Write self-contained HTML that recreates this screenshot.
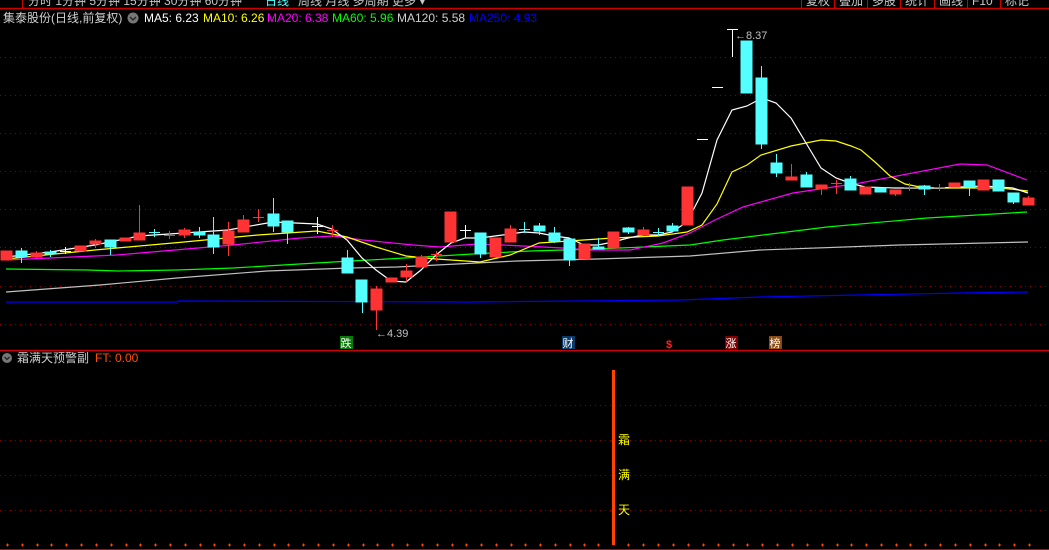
<!DOCTYPE html>
<html><head><meta charset="utf-8"><style>
html,body{margin:0;padding:0;background:#000;width:1049px;height:550px;overflow:hidden}
svg{display:block}
text{font-family:"Liberation Sans","Noto Sans CJK SC",sans-serif}
</style></head><body>
<svg width="1049" height="550" viewBox="0 0 1049 550" xmlns="http://www.w3.org/2000/svg">
<rect width="1049" height="550" fill="#000"/>
<!-- top menu -->
<g font-size="12" fill="#c8c8c8">
<text x="28" y="5">分时  1分钟  5分钟  15分钟  30分钟  60分钟</text>
<text x="265" y="5" fill="#54ffff">日线</text>
<text x="298" y="5">周线  月线  多周期  更多 ▾</text>
<text x="806" y="5">复权</text><text x="839" y="5">叠加</text><text x="872" y="5">多股</text><text x="905" y="5">统计</text><text x="939" y="5">画线</text><text x="972" y="5">F10</text><text x="1005" y="5">标记</text>
</g>
<line x1="0" y1="8.5" x2="1049" y2="8.5" stroke="#c00" stroke-width="1.5"/>
<g stroke="#c00"><line x1="22.5" y1="0" x2="22.5" y2="8"/><line x1="801.5" y1="0" x2="801.5" y2="8"/><line x1="834.5" y1="0" x2="834.5" y2="8"/><line x1="867.5" y1="0" x2="867.5" y2="8"/><line x1="900.5" y1="0" x2="900.5" y2="8"/><line x1="934.5" y1="0" x2="934.5" y2="8"/><line x1="967.5" y1="0" x2="967.5" y2="8"/><line x1="1000.5" y1="0" x2="1000.5" y2="8"/></g>
<!-- legend -->
<g font-size="12">
<text x="3" y="22" fill="#d0d0d0">集泰股份(日线,前复权)</text>
<circle cx="133" cy="18" r="5.5" fill="#777"/><path d="M130 17l3 3 3-3" stroke="#222" stroke-width="1.3" fill="none"/>
<text x="144" y="22" fill="#fff">MA5: 6.23</text>
<text x="203" y="22" fill="#ff0">MA10: 6.26</text>
<text x="267" y="22" fill="#f0f">MA20: 6.38</text>
<text x="332" y="22" fill="#0f0">MA60: 5.96</text>
<text x="397" y="22" fill="#d0d0d0">MA120: 5.58</text>
<text x="469" y="22" fill="#00f">MA250: 4.93</text>
</g>
<!-- grid -->
<g stroke="#8a0000" stroke-dasharray="1 4">
<line x1="0" y1="57.5" x2="1049" y2="57.5"/><line x1="0" y1="95.5" x2="1049" y2="95.5"/><line x1="0" y1="133.5" x2="1049" y2="133.5"/><line x1="0" y1="171.5" x2="1049" y2="171.5"/><line x1="0" y1="209.5" x2="1049" y2="209.5"/><line x1="0" y1="247.5" x2="1049" y2="247.5"/><line x1="0" y1="286.5" x2="1049" y2="286.5"/><line x1="0" y1="324.5" x2="1049" y2="324.5"/>
<line x1="0" y1="405.5" x2="1049" y2="405.5"/><line x1="0" y1="440.5" x2="1049" y2="440.5"/><line x1="0" y1="475.5" x2="1049" y2="475.5"/><line x1="0" y1="510.5" x2="1049" y2="510.5"/>
</g>
<!-- MAs -->
<g fill="none" stroke-width="1.2">
<polyline stroke="#0000ff" points="6,302 177,302 178,301 470,302 680,300 760,297 960,293 1028,292"/>
<polyline stroke="#c0c0c0" points="6,292 100,285 177,278 267,271 350,268 397,267 517,261 597,259 690,256 760,250 900,245 1028,242"/>
<polyline stroke="#00ff00" points="6,269 87,270 118,271 177,270 233,268 283,265 350,261 370,260 473,254 530,251 597,249 690,245 723,240 827,227 927,218 1027,212"/>
<polyline stroke="#ff00ff" points="6,260 117,255 233,245 300,238 333,236 363,240 413,245 440,247 477,244 503,245 543,247 563,248 590,250 630,250 663,243 690,233 715,220 743,207 793,193 860,183 960,164 987,165 1027,180"/>
<polyline stroke="#ffff00" points="6,259 95,250 184,242 258,235 317,231 347,237 376,247 406,256 436,259 451,260 480,262 510,255 539,243 569,241 613,238 658,236 687,232 702,225 717,204 732,172 747,165 761,155 791,146 806,143 821,140 836,141 851,146 861,150 875,162 890,176 905,184 925,188 960,188 1000,188 1028,191"/>
<polyline stroke="#ffffff" points="6,257 50,252 95,245 139,236 184,233 228,230 273,222 317,224 332,229 347,240 362,258 376,270 391,281 406,282 421,270 436,255 451,243 465,238 480,238 495,236 510,234 524,232 539,233 554,236 569,238 584,245 598,245 613,242 628,238 643,235 658,235 672,232 687,222 702,193 717,140 732,110 747,106 762,98 776,103 791,118 806,143 821,168 836,178 850,183 865,187 895,188 939,188 984,186 1013,188 1028,193"/>
</g>
<!-- candles -->
<g id="c">
<!-- format: wick then body -->
<g stroke="#ff3333" fill="#ff3333">
<rect x="1" y="251" width="11" height="9"/>
<line x1="36.5" y1="251" x2="36.5" y2="258"/><rect x="31" y="253" width="11" height="4"/>
<rect x="75" y="246" width="11" height="5"/>
<line x1="95.5" y1="239" x2="95.5" y2="248"/><rect x="90" y="241" width="11" height="3"/>
<rect x="120" y="238" width="11" height="3"/>
<line x1="139.5" y1="205" x2="139.5" y2="240"/><rect x="134" y="233" width="11" height="7"/>
<line x1="169.5" y1="231" x2="169.5" y2="239"/><line x1="164" y1="235.5" x2="175" y2="235.5"/>
<line x1="184.5" y1="228" x2="184.5" y2="238"/><rect x="179" y="230" width="11" height="5"/>
<line x1="228.5" y1="222" x2="228.5" y2="256"/><rect x="223" y="231" width="11" height="13"/>
<line x1="243.5" y1="215" x2="243.5" y2="232"/><rect x="238" y="220" width="11" height="12"/>
<line x1="258.5" y1="209" x2="258.5" y2="222"/><line x1="253" y1="217.5" x2="264" y2="217.5"/>
<line x1="332.5" y1="225" x2="332.5" y2="237"/><line x1="327" y1="230.5" x2="338" y2="230.5"/>
<line x1="376.5" y1="286" x2="376.5" y2="330"/><rect x="371" y="289" width="11" height="21"/>
<rect x="386" y="278" width="11" height="4"/>
<line x1="406.5" y1="264" x2="406.5" y2="282"/><rect x="401" y="271" width="11" height="6"/>
<line x1="421.5" y1="255" x2="421.5" y2="267"/><rect x="416" y="257" width="11" height="10"/>
<line x1="436.5" y1="251" x2="436.5" y2="261"/><line x1="431" y1="254.5" x2="442" y2="254.5"/>
<rect x="445" y="212" width="11" height="30"/>
<rect x="490" y="238" width="11" height="19"/>
<line x1="510.5" y1="225" x2="510.5" y2="242"/><rect x="505" y="229" width="11" height="13"/>
<rect x="579" y="244" width="11" height="15"/>
<rect x="608" y="232" width="11" height="16"/>
<line x1="643.5" y1="227" x2="643.5" y2="236"/><rect x="638" y="230" width="11" height="5"/>
<rect x="682" y="187" width="11" height="38"/>
<line x1="791.5" y1="164" x2="791.5" y2="180"/><rect x="786" y="177" width="11" height="3"/>
<line x1="821.5" y1="185" x2="821.5" y2="195"/><rect x="816" y="185" width="11" height="4"/>
<line x1="836.5" y1="180" x2="836.5" y2="194"/><line x1="831" y1="183.5" x2="842" y2="183.5"/>
<rect x="860" y="187" width="11" height="7"/>
<line x1="895.5" y1="190" x2="895.5" y2="196"/><rect x="890" y="190" width="11" height="4"/>
<line x1="909.5" y1="183" x2="909.5" y2="191"/><line x1="904" y1="187.5" x2="915" y2="187.5"/>
<line x1="939.5" y1="184" x2="939.5" y2="191"/><line x1="934" y1="187.5" x2="945" y2="187.5"/>
<rect x="949" y="183" width="11" height="4"/>
<rect x="978" y="180" width="11" height="10"/>
<line x1="1028.5" y1="196" x2="1028.5" y2="205"/><rect x="1023" y="198" width="11" height="7"/>
</g>
<g stroke="#54ffff" fill="#54ffff">
<line x1="21.5" y1="248" x2="21.5" y2="263"/><rect x="16" y="251" width="11" height="6"/>
<line x1="50.5" y1="250" x2="50.5" y2="257"/><rect x="45" y="252" width="11" height="2"/>
<line x1="110.5" y1="240" x2="110.5" y2="255"/><rect x="105" y="240" width="11" height="7"/>
<line x1="154.5" y1="229" x2="154.5" y2="237"/><line x1="149" y1="232.5" x2="160" y2="232.5"/>
<line x1="199.5" y1="227" x2="199.5" y2="238"/><rect x="194" y="232" width="11" height="3"/>
<line x1="213.5" y1="217" x2="213.5" y2="254"/><rect x="208" y="235" width="11" height="12"/>
<line x1="273.5" y1="198" x2="273.5" y2="232"/><rect x="268" y="214" width="11" height="12"/>
<line x1="287.5" y1="221" x2="287.5" y2="244"/><rect x="282" y="221" width="11" height="11"/>
<line x1="347.5" y1="250" x2="347.5" y2="273"/><rect x="342" y="258" width="11" height="15"/>
<line x1="362.5" y1="280" x2="362.5" y2="313"/><rect x="356" y="280" width="11" height="22"/>
<line x1="480.5" y1="233" x2="480.5" y2="258"/><rect x="475" y="233" width="11" height="21"/>
<line x1="524.5" y1="222" x2="524.5" y2="233"/><line x1="519" y1="229.5" x2="530" y2="229.5"/>
<line x1="539.5" y1="223" x2="539.5" y2="235"/><rect x="534" y="226" width="11" height="5"/>
<line x1="554.5" y1="227" x2="554.5" y2="243"/><rect x="549" y="233" width="11" height="8"/>
<line x1="569.5" y1="239" x2="569.5" y2="266"/><rect x="564" y="239" width="11" height="21"/>
<line x1="598.5" y1="238" x2="598.5" y2="249"/><rect x="593" y="247" width="11" height="2"/>
<line x1="628.5" y1="227" x2="628.5" y2="234"/><rect x="623" y="228" width="11" height="4"/>
<line x1="658.5" y1="228" x2="658.5" y2="236"/><line x1="653" y1="232.5" x2="664" y2="232.5"/>
<line x1="672.5" y1="223" x2="672.5" y2="231"/><rect x="667" y="226" width="11" height="5"/>
<rect x="741" y="41" width="11" height="52"/>
<line x1="761.5" y1="66" x2="761.5" y2="149"/><rect x="756" y="78" width="11" height="66"/>
<line x1="776.5" y1="154" x2="776.5" y2="177"/><rect x="771" y="163" width="11" height="10"/>
<line x1="806.5" y1="172" x2="806.5" y2="187"/><rect x="801" y="175" width="11" height="12"/>
<line x1="850.5" y1="176" x2="850.5" y2="190"/><rect x="845" y="179" width="11" height="11"/>
<rect x="875" y="188" width="11" height="4"/>
<line x1="924.5" y1="185" x2="924.5" y2="195"/><rect x="919" y="186" width="11" height="3"/>
<line x1="969.5" y1="181" x2="969.5" y2="196"/><rect x="964" y="181" width="11" height="6"/>
<rect x="993" y="180" width="11" height="11"/>
<line x1="1013.5" y1="193" x2="1013.5" y2="204"/><rect x="1008" y="193" width="11" height="9"/>
</g>
<g stroke="#fff">
<line x1="65.5" y1="247" x2="65.5" y2="254"/><line x1="60" y1="251.5" x2="71" y2="251.5"/>
<line x1="317.5" y1="217" x2="317.5" y2="234"/><line x1="312" y1="226.5" x2="323" y2="226.5"/>
<line x1="465.5" y1="225" x2="465.5" y2="238"/><line x1="460" y1="230.5" x2="471" y2="230.5"/>
<line x1="697" y1="139.5" x2="708" y2="139.5"/>
<line x1="712" y1="87.5" x2="723" y2="87.5"/>
<line x1="732.5" y1="29" x2="732.5" y2="57"/><line x1="727" y1="29.5" x2="738" y2="29.5"/>
</g>
</g>
<!-- labels -->
<g font-size="11" fill="#c0c0c0">
<text x="376" y="337">←4.39</text>
<text x="735" y="39">←8.37</text>
</g>
<g font-size="11" fill="#fff">
<rect x="340" y="336" width="13" height="13" fill="#0a7a0a"/><text x="340.5" y="347">跌</text>
<rect x="562" y="336" width="13" height="13" fill="#0a3a6a"/><text x="562.5" y="347">财</text>
<text x="666" y="348" fill="#ff2020" font-weight="bold">$</text>
<rect x="725" y="336" width="13" height="13" fill="#800000"/><text x="725.5" y="347">涨</text>
<rect x="769" y="336" width="13" height="13" fill="#8a4a10"/><text x="769.5" y="347">榜</text>
</g>
<line x1="0" y1="350.5" x2="1049" y2="350.5" stroke="#c00" stroke-width="1.5"/>
<!-- lower panel -->
<circle cx="7" cy="358" r="5" fill="#777"/><path d="M4.5 357l2.5 2.5 2.5-2.5" stroke="#222" stroke-width="1.3" fill="none"/>
<text x="17" y="362" font-size="12" fill="#d0d0d0">霜满天预警副</text>
<text x="95" y="362" font-size="12" fill="#ff5000">FT: 0.00</text>
<rect x="612" y="370" width="3" height="175" fill="#ff4500"/>
<g font-size="12" fill="#ffff00"><text x="618" y="444">霜</text><text x="618" y="479">满</text><text x="618" y="514">天</text></g>
<g fill="#ff4500" id="m"></g>
<g stroke="#ff4500" stroke-width="1">
<path d="M6 545h3M7.5 543.5v3M21 545h3M22.5 543.5v3M36 545h3M37.5 543.5v3M50 545h3M51.5 543.5v3M65 545h3M66.5 543.5v3M80 545h3M81.5 543.5v3M95 545h3M96.5 543.5v3M110 545h3M111.5 543.5v3M125 545h3M126.5 543.5v3M139 545h3M140.5 543.5v3M154 545h3M155.5 543.5v3M169 545h3M170.5 543.5v3M184 545h3M185.5 543.5v3M199 545h3M200.5 543.5v3M213 545h3M214.5 543.5v3M228 545h3M229.5 543.5v3M243 545h3M244.5 543.5v3M258 545h3M259.5 543.5v3M273 545h3M274.5 543.5v3M287 545h3M288.5 543.5v3M302 545h3M303.5 543.5v3M317 545h3M318.5 543.5v3M332 545h3M333.5 543.5v3M347 545h3M348.5 543.5v3M362 545h3M363.5 543.5v3M376 545h3M377.5 543.5v3M391 545h3M392.5 543.5v3M406 545h3M407.5 543.5v3M421 545h3M422.5 543.5v3M436 545h3M437.5 543.5v3M451 545h3M452.5 543.5v3M465 545h3M466.5 543.5v3M480 545h3M481.5 543.5v3M495 545h3M496.5 543.5v3M510 545h3M511.5 543.5v3M524 545h3M525.5 543.5v3M539 545h3M540.5 543.5v3M554 545h3M555.5 543.5v3M569 545h3M570.5 543.5v3M583 545h3M584.5 543.5v3M597 545h3M598.5 543.5v3M627 545h3M628.5 543.5v3M642 545h3M643.5 543.5v3M657 545h3M658.5 543.5v3M672 545h3M673.5 543.5v3M687 545h3M688.5 543.5v3M702 545h3M703.5 543.5v3M717 545h3M718.5 543.5v3M732 545h3M733.5 543.5v3M746 545h3M747.5 543.5v3M761 545h3M762.5 543.5v3M776 545h3M777.5 543.5v3M791 545h3M792.5 543.5v3M806 545h3M807.5 543.5v3M821 545h3M822.5 543.5v3M836 545h3M837.5 543.5v3M850 545h3M851.5 543.5v3M865 545h3M866.5 543.5v3M880 545h3M881.5 543.5v3M895 545h3M896.5 543.5v3M909 545h3M910.5 543.5v3M924 545h3M925.5 543.5v3M939 545h3M940.5 543.5v3M954 545h3M955.5 543.5v3M969 545h3M970.5 543.5v3M984 545h3M985.5 543.5v3M998 545h3M999.5 543.5v3M1013 545h3M1014.5 543.5v3M1028 545h3M1029.5 543.5v3"/>
</g>
<line x1="0" y1="549.5" x2="1049" y2="549.5" stroke="#c00"/>
</svg>
</body></html>
